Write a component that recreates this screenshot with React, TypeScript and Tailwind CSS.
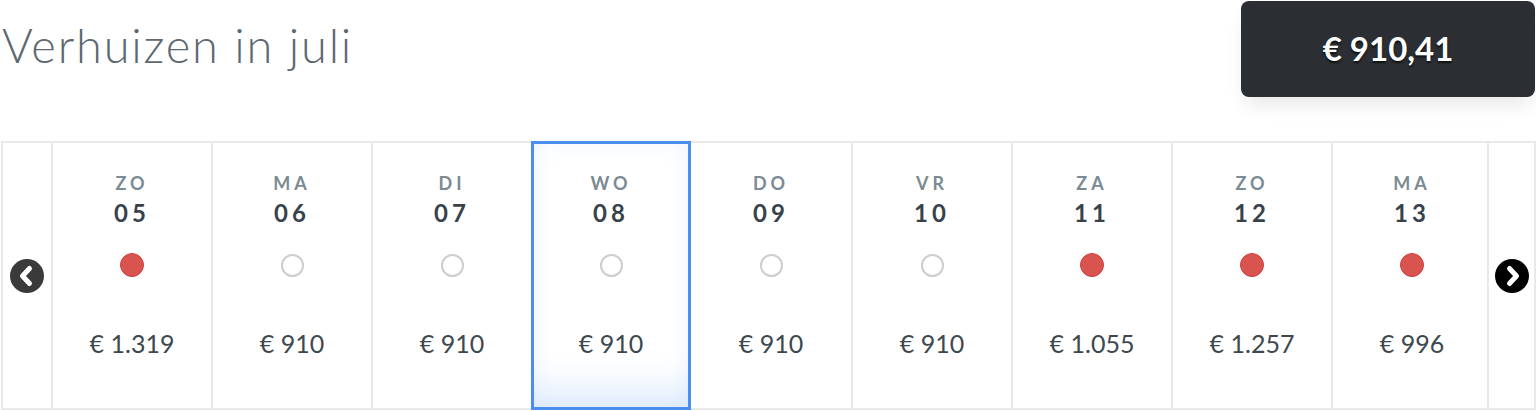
import React from 'react';

type Day = {
  weekday: string;
  date: string;
  price: string;
  busy: boolean;
};

const days: Day[] = [
  { weekday: 'ZO', date: '05', price: '€ 1.319', busy: true },
  { weekday: 'MA', date: '06', price: '€ 910', busy: false },
  { weekday: 'DI', date: '07', price: '€ 910', busy: false },
  { weekday: 'WO', date: '08', price: '€ 910', busy: false },
  { weekday: 'DO', date: '09', price: '€ 910', busy: false },
  { weekday: 'VR', date: '10', price: '€ 910', busy: false },
  { weekday: 'ZA', date: '11', price: '€ 1.055', busy: true },
  { weekday: 'ZO', date: '12', price: '€ 1.257', busy: true },
  { weekday: 'MA', date: '13', price: '€ 996', busy: true },
];

const selectedIndex = 3;

const ArrowButton: React.FC<{ dir: 'left' | 'right'; fill: string }> = ({ dir, fill }) => (
  <svg width="34" height="34" viewBox="0 0 34 34">
    <circle cx="17" cy="17" r="17" fill={fill} />
    <polyline
      points={dir === 'left' ? '19.5,9.5 12.5,17 19.5,24.5' : '14.5,9.5 21.5,17 14.5,24.5'}
      fill="none"
      stroke="#fff"
      strokeWidth="5"
      strokeLinecap="round"
      strokeLinejoin="round"
    />
  </svg>
);

const DayCell: React.FC<{ day: Day; selected: boolean; afterSelected: boolean }> = ({ day, selected, afterSelected }) => (
  <div
    className={
      selected
        ? 'w-[160px] shrink-0 flex flex-col items-center border-[3px] border-[#4a8ef0] bg-white shadow-[inset_0_-38px_34px_-18px_rgba(74,142,240,0.16),inset_0_0_22px_rgba(74,142,240,0.07)]'
        : afterSelected
          ? 'w-[160px] shrink-0 flex flex-col items-center border-y-2 border-[#e9e9e9]'
          : 'w-[160px] shrink-0 flex flex-col items-center border-l-2 border-y-2 border-[#e9e9e9]'
    }
  >
    <div className={selected ? 'mt-[29px] text-[18px] leading-[20px] font-bold tracking-[4px] text-[#7c8a93]' : 'mt-[30px] text-[18px] leading-[20px] font-bold tracking-[4px] text-[#7c8a93]'}>
      {day.weekday}
    </div>
    <div className="mt-[8px] text-[24px] leading-[24px] font-bold tracking-[4px] text-[#38424a]">
      {day.date}
    </div>
    {day.busy ? (
      <div className="mt-[28px] w-[24px] h-[24px] rounded-full bg-[#d9534f] border border-[#c8413d]" />
    ) : (
      <div className="mt-[29px] w-[23px] h-[23px] rounded-full border-2 border-[#cdcdcd]" />
    )}
    <div className="mt-[53px] text-[25px] leading-[26px] text-[#3d474e]">
      {day.price}
    </div>
  </div>
);

const App: React.FC = () => {
  return (
    <div className="w-[1536px] h-[411px] bg-white overflow-hidden font-['Lato',sans-serif]">
      {/* Heading + total price */}
      <div className="flex items-start justify-between">
        <h1 className="ml-[2px] mt-[22px] text-[47px] leading-[46px] font-light tracking-[1.8px] text-[#5d6870]">
          Verhuizen in juli
        </h1>
        <div className="mt-[1px] mr-[1px] w-[294px] h-[96px] rounded-lg bg-[#2b2f33] shadow-[0_12px_20px_-4px_rgba(0,0,0,0.09)] flex items-center justify-center text-white text-[33px] font-bold [text-shadow:0_2px_2px_rgba(0,0,0,0.7)]">
          € 910,41
        </div>
      </div>

      {/* Day strip */}
      <div className="mt-[44px] ml-[1px] flex h-[269px]">
        <div className="w-[50px] shrink-0 flex items-center justify-center border-l-2 border-y-2 border-[#e9e9e9]">
          <ArrowButton dir="left" fill="#3a3a3a" />
        </div>
        <div className="flex-1 overflow-hidden flex">
          {days.map((day, i) => (
            <DayCell
              key={day.date}
              day={day}
              selected={i === selectedIndex}
              afterSelected={i === selectedIndex + 1}
            />
          ))}
        </div>
        <div className="w-[49px] shrink-0 flex items-center justify-center border-2 border-[#e9e9e9]">
          <ArrowButton dir="right" fill="#000" />
        </div>
      </div>
    </div>
  );
};

export default App;
